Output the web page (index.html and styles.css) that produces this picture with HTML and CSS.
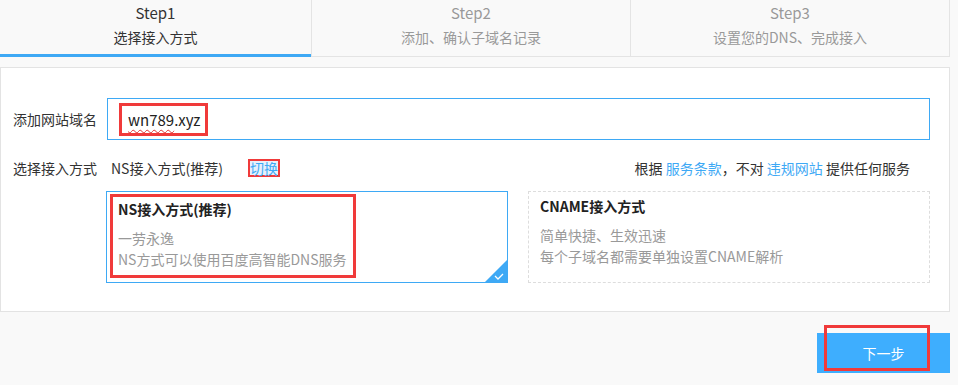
FILE: index.html
```html
<!DOCTYPE html>
<html lang="zh">
<head>
<meta charset="utf-8">
<link rel="stylesheet" href="styles.css">
</head>
<body>
<div class="page">
  <div class="tabs">
    <div class="tab tab1 active"><div class="step">Step1</div><div class="sub">选择接入方式</div></div>
    <div class="tab tab2"><div class="step">Step2</div><div class="sub">添加、确认子域名记录</div></div>
    <div class="tab tab3"><div class="step">Step3</div><div class="sub">设置您的DNS、完成接入</div></div>
  </div>
  <div class="panel">
    <div class="row row-domain">
      <div class="label">添加网站域名</div>
      <div class="input"><span class="mark mark-input"><span class="typo">wn789</span>.xyz</span></div>
    </div>
    <div class="row row-mode">
      <div class="label">选择接入方式</div>
      <div class="mode">NS接入方式(推荐)</div>
      <a class="switch">切换</a>
      <div class="terms">根据 <a class="link">服务条款</a>，不对 <a class="link">违规网站</a> 提供任何服务</div>
    </div>
    <div class="cards">
      <div class="card selected">
        <div class="mark-card">
          <div class="card-title">NS接入方式(推荐)</div>
          <div class="card-line">一劳永逸</div>
          <div class="card-line">NS方式可以使用百度高智能DNS服务</div>
        </div>
        <svg class="corner" width="24" height="24" viewBox="0 0 24 24"><polygon points="24,0 24,24 0,24" fill="#3ea9f5"/><polyline points="11,17 14,20 19,15" fill="none" stroke="#fff" stroke-width="1.3"/></svg>
      </div>
      <div class="card dashed">
        <div class="card-inner">
          <div class="card-title">CNAME接入方式</div>
          <div class="card-line">简单快捷、生效迅速</div>
          <div class="card-line">每个子域名都需要单独设置CNAME解析</div>
        </div>
      </div>
    </div>
  </div>
  <div class="footer">
    <div class="btn-wrap">
      <button class="next">下一步</button>
      <div class="mark-btn"></div>
    </div>
  </div>
</div>
</body>
</html>
```
FILE: styles.css
```css
html, body {
  margin: 0;
  padding: 0;
  background: #f9f9f9;
  font-family: "Noto Sans CJK SC", "Noto Sans", sans-serif;
  font-size: 14px;
  color: #333;
}
.page {
  width: 950px;
}
.tabs {
  display: flex;
  height: 56px;
  border-bottom: 1px solid #e4e4e4;
  border-right: 1px solid #e4e4e4;
}
.tab {
  text-align: center;
  color: #999;
  border-right: 1px solid #e4e4e4;
  position: relative;
}
.tab1 { width: 311px; }
.tab2 { width: 318px; }
.tab3 { flex: 1; border-right: none; }
.tab.active { color: #333; }
.tab.active::after {
  content: "";
  position: absolute;
  left: 0; right: 0; bottom: -1px;
  height: 3px;
  background: #3ea9f5;
}
.step {
  font-size: 15px;
  line-height: 20px;
  padding-top: 3px;
}
.sub {
  font-size: 14px;
  line-height: 20px;
  margin-top: 4px;
}
.panel {
  margin-top: 10px;
  background: #fff;
  border: 1px solid #e3e3e3;
  box-sizing: border-box;
  height: 245px;
}
.row {
  display: flex;
  align-items: center;
}
.label {
  width: 94px;
  padding-left: 12px;
  color: #333;
}
.row-domain { margin-top: 30px; }
.input {
  width: 823px;
  height: 42px;
  box-sizing: border-box;
  border: 1px solid #3ea9f5;
  display: flex;
  align-items: center;
  padding-left: 11px;
}
.mark-input {
  border: 3px solid #f03a3a;
  height: 33px;
  width: 89px;
  box-sizing: border-box;
  padding: 0 0 0 6px;
  display: flex;
  align-items: center;
  font-size: 15px;
  color: #222;
}
.typo {
  text-decoration: underline wavy #e03030;
  text-decoration-thickness: 1px;
  text-underline-offset: 3px;
}
.row-mode {
  margin-top: 17px;
  height: 22px;
}
.mode { margin-left: 4px; width: 137px; }
.switch {
  color: #3ea9f5;
  border: 2px solid #f03a3a;
  padding: 0;
  line-height: 14px;
  background: #e8f1fb;
}
.terms {
  margin-left: auto;
  margin-right: 39px;
  color: #333;
}
.link { color: #3ea9f5; }
.cards {
  display: flex;
  gap: 20px;
  margin-top: 12px;
  margin-left: 105px;
}
.card {
  height: 92px;
  box-sizing: border-box;
  position: relative;
}
.card.selected {
  width: 402px;
  border: 1px solid #3ea9f5;
  padding: 2px 3px;
}
.card.dashed {
  width: 402px;
  border: 1px dashed #ddd;
}
.mark-card {
  width: 246px;
  height: 84px;
  box-sizing: border-box;
  border: 3px solid #f03a3a;
  padding: 1px 0 0 5px;
}
.card-inner { padding: 3px 0 0 11px; }
.card-title {
  font-weight: bold;
  color: #222;
  line-height: 22px;
  margin-bottom: 8px;
}
.card-line {
  color: #999;
  line-height: 21px;
}
.corner {
  position: absolute;
  right: -1px;
  bottom: -1px;
  display: block;
}
.footer {
  display: flex;
  justify-content: flex-end;
  padding-top: 21px;
}
.btn-wrap { position: relative; }
.next {
  display: block;
  width: 133px;
  height: 40px;
  border: none;
  background: #3eaefe;
  color: #fff;
  font-family: inherit;
  font-size: 14px;
  padding: 0;
}
.mark-btn {
  position: absolute;
  left: 7px;
  top: -8px;
  width: 106px;
  height: 46px;
  box-sizing: border-box;
  border: 3px solid #f03a3a;
  pointer-events: none;
}
```
